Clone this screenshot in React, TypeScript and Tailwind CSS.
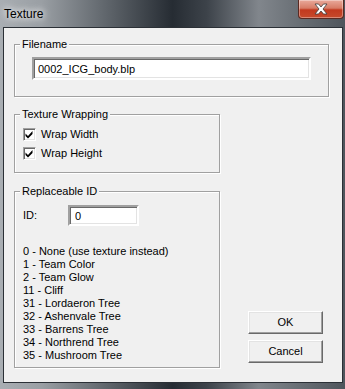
import React, { useState } from 'react';

const replaceableIds = [
  '0 - None (use texture instead)',
  '1 - Team Color',
  '2 - Team Glow',
  '11 - Cliff',
  '31 - Lordaeron Tree',
  '32 - Ashenvale Tree',
  '33 - Barrens Tree',
  '34 - Northrend Tree',
  '35 - Mushroom Tree',
];

const sunken =
  'border-2 border-t-[#a0a0a0] border-l-[#a0a0a0] border-b-white border-r-white shadow-[inset_1px_1px_0_#696969,inset_-1px_-1px_0_#e3e3e3] bg-white';

const raised =
  'border border-t-white border-l-white border-b-[#696969] border-r-[#696969] shadow-[inset_-1px_-1px_0_#a0a0a0,inset_1px_1px_0_#e3e3e3] bg-[#f0f0f0]';

const groupBox =
  'border border-[#a0a0a0] shadow-[inset_1px_1px_0_white,1px_1px_0_white] p-0 m-0';

const Checkbox: React.FC<{ label: string; checked: boolean; onToggle: () => void }> = ({ label, checked, onToggle }) => (
  <div className="flex items-center gap-[5px] h-[13px] cursor-default" onClick={onToggle}>
    <div className="w-[13px] h-[13px] border border-t-[#a0a0a0] border-l-[#a0a0a0] border-b-white border-r-white shadow-[inset_1px_1px_0_#696969,inset_-1px_-1px_0_#e3e3e3] bg-white flex items-center justify-center">
      {checked && (
        <svg width="9" height="9" viewBox="0 0 9 9">
          <path d="M0.5 3.5 L3 6 L7.5 1 L7.5 4 L3 8.5 L0.5 6 Z" fill="#000" />
        </svg>
      )}
    </div>
    <span>{label}</span>
  </div>
);

const App: React.FC = () => {
  const [wrapWidth, setWrapWidth] = useState(true);
  const [wrapHeight, setWrapHeight] = useState(true);
  const [filename, setFilename] = useState('0002_ICG_body.blp');
  const [id, setId] = useState('0');

  return (
    <div className="w-[345px] h-[389px] overflow-hidden flex flex-col bg-[linear-gradient(to_right,#a9aeb3_0%,#9a9fa4_12%,#62686e_30%,#262c33_50%,#3d434a_60%,#81868c_75%,#6a7076_86%,#4f555c_100%)] font-['Liberation_Sans',Arial,sans-serif] text-[11px] leading-[13px] text-black">
      <div className="h-[27px] flex items-start shrink-0">
        <div className="pl-[4px] pt-[7px] text-[12px] leading-[14px] [text-shadow:0_0_6px_#fff,0_0_10px_#fff]">Texture</div>
        <div className="ml-auto mr-[1px] w-[46px] h-[19px] rounded-b-[4px] border border-t-0 border-[#5a2a22] bg-[linear-gradient(to_bottom,#e9a99b_0%,#d77c66_45%,#c2391f_55%,#c64a2c_100%)] shadow-[inset_0_0_0_1px_rgba(255,255,255,0.35)] flex items-center justify-center">
          <svg width="16" height="12" viewBox="0 0 16 12">
            <path d="M2 1 L5.5 1 L8 4 L10.5 1 L14 1 L10 6 L14 11 L10.5 11 L8 8 L5.5 11 L2 11 L6 6 Z" fill="#fff" stroke="#3b3b3b" strokeWidth="0.8" />
          </svg>
        </div>
      </div>

      <div className="ml-[3px] w-[340px] h-[356px] border border-[#2b3036] bg-[#f0f0f0] pl-[10px] pt-[10px]">
        <fieldset className={`${groupBox} w-[315px]`}>
          <legend className="ml-[5px] px-[2px] bg-[#f0f0f0] leading-[13px]">Filename</legend>
          <div className="pl-[17px] pt-[6px] pb-[16px]">
            <input
              value={filename}
              onChange={e => setFilename(e.target.value)}
              className={`${sunken} w-[279px] h-[23px] px-[4px] outline-none text-[11px]`}
            />
          </div>
        </fieldset>

        <fieldset className={`${groupBox} w-[206px] mt-[11px]`}>
          <legend className="ml-[5px] px-[2px] bg-[#f0f0f0] leading-[13px]">Texture Wrapping</legend>
          <div className="pl-[8px] pt-[7px] pb-[12px] flex flex-col gap-[6px]">
            <Checkbox label="Wrap Width" checked={wrapWidth} onToggle={() => setWrapWidth(!wrapWidth)} />
            <Checkbox label="Wrap Height" checked={wrapHeight} onToggle={() => setWrapHeight(!wrapHeight)} />
          </div>
        </fieldset>

        <div className="flex items-end mt-[12px]">
          <fieldset className={`${groupBox} w-[206px]`}>
            <legend className="ml-[5px] px-[2px] bg-[#f0f0f0] leading-[13px]">Replaceable ID</legend>
            <div className="pl-[8px] pt-[7px] pb-[5px]">
              <div className="flex items-center">
                <span className="w-[45px]">ID:</span>
                <input
                  value={id}
                  onChange={e => setId(e.target.value)}
                  className={`${sunken} w-[71px] h-[21px] px-[5px] outline-none text-[11px]`}
                />
              </div>
              <div className="mt-[19px] flex flex-col">
                {replaceableIds.map(item => (
                  <div key={item}>{item}</div>
                ))}
              </div>
            </div>
          </fieldset>

          <div className="ml-[28px] mb-[5px] flex flex-col gap-[6px]">
            <button className={`${raised} w-[75px] h-[23px] text-[11px]`}>OK</button>
            <button className={`${raised} w-[75px] h-[23px] text-[11px]`}>Cancel</button>
          </div>
        </div>
      </div>
    </div>
  );
};

export default App;
